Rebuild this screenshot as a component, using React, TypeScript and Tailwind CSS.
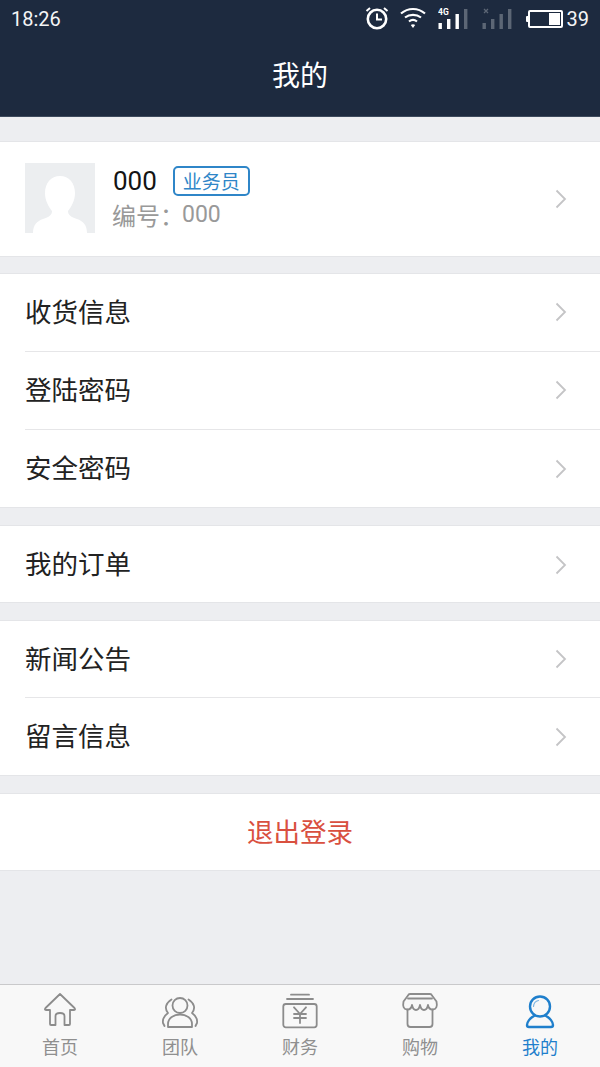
const cjk = "font-['Noto_Sans_CJK_SC','Noto_Sans',sans-serif]";

function Chevron({ className = "" }: { className?: string }) {
  return (
    <svg width="12" height="20" viewBox="0 0 12 20" fill="none" className={`shrink-0 ${className}`}>
      <path d="M1.5 1.5 L10 10 L1.5 18.5" stroke="#c4c4c6" strokeWidth="1.8" />
    </svg>
  );
}

function Row({ label, line, short }: { label: string; line?: boolean; short?: boolean }) {
  return (
    <div className="pl-[25px]">
      <div
        className={`flex items-center justify-between pr-[33px] ${short ? "h-[77px] pb-[2px]" : "h-[78px] pb-[3px]"} ${
          line ? "border-b border-[#e6e6e8]" : ""
        }`}
      >
        <span className="text-[26.5px] leading-none text-[#222222]">{label}</span>
        <Chevron className="mt-[2px]" />
      </div>
    </div>
  );
}

function Group({ children }: { children: React.ReactNode }) {
  return <div className="border-y border-[#e4e5e8] bg-white">{children}</div>;
}

function StatusIcons() {
  return (
    <div className="flex items-center">
      <svg width="26" height="24" viewBox="0 0 26 24" fill="none" stroke="#fff" className="mr-[10px]">
        <circle cx="13" cy="12" r="9.2" strokeWidth="2.6" />
        <path d="M13 6.5 V12.5 H18" strokeWidth="2" />
        <path d="M2.5 4 L6 1 M23.5 4 L20 1" strokeWidth="2" />
      </svg>
      <svg width="26" height="24" viewBox="0 1 26 24" fill="none" stroke="#fff" strokeWidth="2.2" className="mr-[12px]">
        <path d="M1 7.5 C8 1.5 18 1.5 25 7.5" />
        <path d="M5 11.5 C9.5 8 16.5 8 21 11.5" />
        <path d="M9 15.5 C11.5 13.5 14.5 13.5 17 15.5" />
        <path d="M13 22 L10.8 19 Q13 17.6 15.2 19 Z" fill="#fff" stroke="none" />
      </svg>
      <svg width="31" height="24" viewBox="0 1 31 24" fill="#fff" className="mr-[13px]">
        <text x="0" y="9" fontSize="8.5" fontWeight="700" fontFamily="Roboto, sans-serif">4G</text>
        <rect x="0.5" y="17" width="3.4" height="6" />
        <rect x="9" y="13" width="3.4" height="10" />
        <rect x="17.5" y="8" width="3.4" height="15" />
        <rect x="26" y="3" width="3.4" height="20" fill="#5c6675" />
      </svg>
      <svg width="31" height="24" viewBox="0 1 31 24" fill="#5c6675" className="mr-[13px]">
        <path d="M2 3 L6 7 M6 3 L2 7" stroke="#5c6675" strokeWidth="1.3" />
        <rect x="0.5" y="17" width="3.4" height="6" />
        <rect x="9" y="13" width="3.4" height="10" />
        <rect x="17.5" y="8" width="3.4" height="15" />
        <rect x="26" y="3" width="3.4" height="20" />
      </svg>
      <div className="flex items-center">
        <div className="h-[6px] w-[2px] rounded-l-[1px] bg-white" />
        <div className="flex h-[18px] w-[35px] justify-end rounded-[2px] border-2 border-white p-[1px]">
          <div className="w-[11px] bg-white" />
        </div>
      </div>
      <span className="ml-[4px] font-['Roboto',sans-serif] text-[20px] leading-none text-[#f4f5f6]">39</span>
    </div>
  );
}

const grayIcon = { fill: "none", stroke: "#8c8c8c", strokeWidth: 1.8, strokeLinejoin: "round", strokeLinecap: "round" } as const;
const tabs = [
  {
    label: "首页",
    icon: (
      <svg width="34" height="36" viewBox="0 0 34 36" {...grayIcon}>
        <path d="M17 1 L31.5 15 Q33 17 30.5 17 H27 V31 Q27 32 26 32 H21.5 V23 Q21.5 20 17 20 Q12.5 20 12.5 23 V32 H8 Q7 32 7 31 V17 H3.5 Q1 17 2.5 15 Z" />
      </svg>
    ),
  },
  {
    label: "团队",
    icon: (
      <svg width="38" height="36" viewBox="0 0 38 36" {...grayIcon}>
        <circle cx="19" cy="12.5" r="7.5" />
        <path d="M7 34 V31 C7 25 13 21.5 19 21.5 C25 21.5 31 25 31 31 V34 Z" />
        <path d="M10.5 6.5 C5 10 3 15 7 20 C3 23 1.5 27 2 30 L3.5 33" />
        <path d="M27.5 6.5 C33 10 35 15 31 20 C35 23 36.5 27 36 30 L34.5 33" />
      </svg>
    ),
  },
  {
    label: "财务",
    icon: (
      <svg width="38" height="36" viewBox="0 0 38 36" {...grayIcon}>
        <path d="M10 1.7 H28 M6 6 H32" />
        <rect x="2.3" y="11" width="33.4" height="23.3" rx="2.5" />
        <path d="M13 14.3 L19 21 L25 14.3 M13 21 H25 M13 25 H25 M19 21 V30" />
      </svg>
    ),
  },
  {
    label: "购物",
    icon: (
      <svg width="38" height="36" viewBox="0 0 38 36" {...grayIcon}>
        <path d="M9 1 H29 Q30.5 1 31 2.5 L35.5 8.5 Q37 16 32 16.5 Q28 17 27 12 Q26 17 23 17 Q20 17 19 12 Q18 17 15 17 Q12 17 11 12 Q10 17 6 16.5 Q1 16 2.5 8.5 L7 2.5 Q7.5 1 9 1 Z" />
        <path d="M7 5.5 H31" />
        <path d="M6.5 16.5 V31 Q6.5 34 9.5 34 H28.5 Q31.5 34 31.5 31 V16.5" />
      </svg>
    ),
  },
  {
    label: "我的",
    active: true,
    icon: (
      <svg width="30" height="36" viewBox="0 0 30 36" fill="none" stroke="#1f7fcc" strokeWidth="2.4" strokeLinecap="round">
        <circle cx="15" cy="13.5" r="10" />
        <path d="M8.5 13.5 A6.5 6.5 0 0 1 13.5 7.5" strokeWidth="1.2" stroke="#7fb6e2" />
        <path d="M9 23 C5 25 2 29 2 32 Q2 34 4 34 H26 Q28 34 28 32 C28 29 25 25 21 23" />
      </svg>
    ),
  },
];

export default function App() {
  return (
    <div className={`flex h-[1067px] w-[600px] flex-col overflow-hidden bg-[#edeef1] ${cjk}`}>
      <header className="h-[117px] shrink-0 border-b border-[#3d4a5d] bg-[#1d2a3f]">
        <div className="flex h-[37px] items-center justify-between pl-[11px] pr-[11px]">
          <span className="font-['Roboto',sans-serif] text-[20px] leading-none text-[#f4f5f6]">18:26</span>
          <StatusIcons />
        </div>
        <h1 className="mt-[5px] text-center text-[28px] leading-[64px] font-normal text-white">我的</h1>
      </header>

      <main className="flex flex-1 flex-col">
        <div className="mt-[24px]">
          <Group>
            <div className="flex h-[114px] items-center justify-between pl-[25px] pr-[33px]">
              <div className="flex items-start pb-[2px]">
                <div className="h-[70px] w-[70px] overflow-hidden bg-[#eceef0]">
                  <svg width="70" height="70" viewBox="0 0 70 70" fill="#fff">
                    <path d="M35 13 C44 13 50 20 50 30 C50 38 46 44 43 48 C43 52 46 54 52 56 C58 58 62 62 62 70 H8 C8 62 12 58 18 56 C24 54 27 52 27 48 C24 44 20 38 20 30 C20 20 26 13 35 13 Z" />
                  </svg>
                </div>
                <div className="ml-[18px]">
                  <div className="flex h-[35px] items-center">
                    <span className="font-['Roboto',sans-serif] text-[26px] leading-none text-[#141414]">000</span>
                    <span className="ml-[16px] flex h-[30px] w-[77px] items-center justify-center rounded-[5px] border-2 border-[#2f86c8] text-[19px] leading-none text-[#2f86c8]">
                      业务员
                    </span>
                  </div>
                  <div className="ml-[-1px] mt-[2px] flex items-center text-[24px] leading-[30px] text-[#999999]">
                    <span>编号：</span>
                    <span className="ml-[-2px] font-['Roboto',sans-serif] text-[23px]">000</span>
                  </div>
                </div>
              </div>
              <Chevron />
            </div>
          </Group>
        </div>

        <div className="mt-[16px]">
          <Group>
            <Row label="收货信息" line />
            <Row label="登陆密码" line />
            <Row label="安全密码" short />
          </Group>
        </div>

        <div className="mt-[17px]">
          <Group>
            <div className="h-[76px] overflow-hidden">
              <Row label="我的订单" short />
            </div>
          </Group>
        </div>

        <div className="mt-[17px]">
          <Group>
            <Row label="新闻公告" line short />
            <Row label="留言信息" short />
          </Group>
        </div>

        <div className="mt-[17px]">
          <Group>
            <div className="flex h-[76px] items-center justify-center pb-[2px] text-[26.5px] leading-none text-[#d9503f]">退出登录</div>
          </Group>
        </div>
      </main>

      <nav className="grid h-[83px] shrink-0 grid-cols-5 border-t border-[#c9c9cb] bg-[#f8f8f8]">
        {tabs.map((t) => (
          <div key={t.label} className="flex flex-col items-center pt-[8px]">
            <div className="flex h-[36px] items-center justify-center">{t.icon}</div>
            <span className={`mt-[5px] text-[18px] leading-[24px] ${t.active ? "text-[#1f7fcc]" : "text-[#8f8f8f]"}`}>{t.label}</span>
          </div>
        ))}
      </nav>
    </div>
  );
}
